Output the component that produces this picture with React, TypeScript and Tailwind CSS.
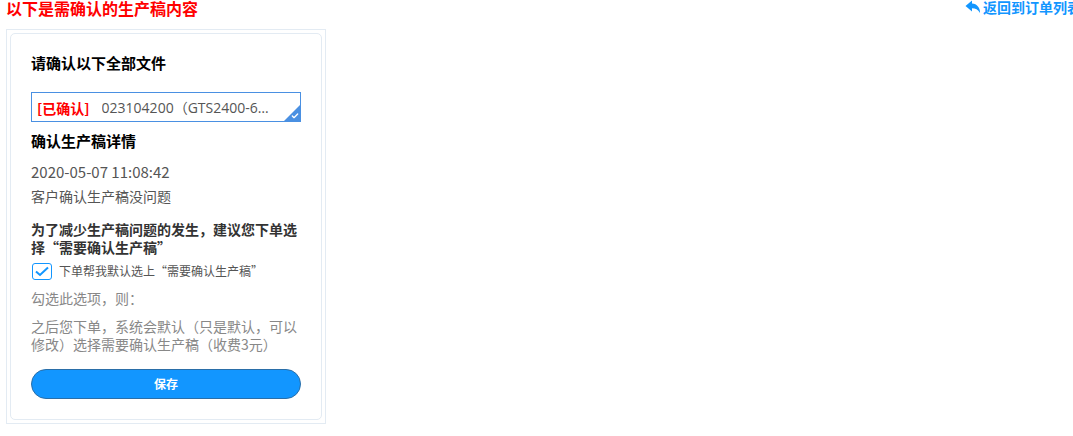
import { Check } from "lucide-react";

const font = "font-['Noto_Sans_CJK_SC','Noto_Sans',sans-serif]";

export default function App() {
  return (
    <div className={`h-[436px] w-[1073px] overflow-hidden bg-white ${font}`}>
      <div className="flex w-[1081px] items-start justify-between pl-[6px] -mt-[3px] h-[32px]">
        <h1 className="text-base font-bold leading-[22px] text-[#ff0000]">以下是需确认的生产稿内容</h1>
        <a className="flex items-center text-sm font-bold leading-[20px] text-[#1296ff]" href="#">
          <svg width="16" height="14" viewBox="0 0 16 14" className="mr-[2px]" fill="#1296ff">
            <path d="M7 0.5 L0.5 6 L7 11.5 V8.2 C10.5 8.2 13 9.5 15 13 C15.2 8 12 3.8 7 3.6 Z" />
          </svg>
          返回到订单列表
        </a>
      </div>

      <div className="ml-[6px] w-[320px] border border-[#e3ebf3] p-[3px]">
        <div className="h-[387px] rounded-[5px] border border-[#e3ebf3] px-5 pt-[19px]">
          <h2 className="text-[15px] font-bold leading-5 text-black">请确认以下全部文件</h2>

          <div className="relative mt-[19px] flex h-[30px] w-[270px] items-center overflow-hidden border border-[#4a90e2] pl-[5px] pt-px text-sm">
            <span className="font-bold text-[#ff0000]">[已确认]</span>
            <span className="ml-[12px] w-[174px] truncate font-['Open_Sans','Noto_Sans_CJK_SC',sans-serif] text-[#555]">
              023104200（GTS2400-6B-1200）
            </span>
            <div className="absolute bottom-0 right-0 h-0 w-0 border-b-[16px] border-l-[16px] border-b-[#4a90e2] border-l-transparent" />
            <Check className="absolute bottom-[1px] right-[1px] text-white" size={8} strokeWidth={4} />
          </div>

          <h3 className="mt-[9px] text-[15px] font-bold leading-5 text-black">确认生产稿详情</h3>
          <p className="mt-[11px] text-[15px] leading-5 text-[#555]">2020-05-07 11:08:42</p>
          <p className="mt-[4px] text-sm leading-5 text-[#555]">客户确认生产稿没问题</p>

          <p className="mt-[14px] text-sm font-bold leading-[18px] text-[#333]">
            为了减少生产稿问题的发生，建议您下单选择“需要确认生产稿”
          </p>
          <label className="mt-[5px] flex items-center">
            <span className="ml-[1px] flex h-[17px] w-[20px] items-center justify-center rounded-[3px] border border-[#1296ff]">
              <svg width="14" height="11" viewBox="0 0 14 11" fill="none" stroke="#1296ff" strokeWidth="2">
                <path d="M1 5.5 L5 9 L13 1.5" />
              </svg>
            </span>
            <span className="ml-[7px] text-xs leading-5 text-[#555]">下单帮我默认选上“需要确认生产稿”</span>
          </label>
          <p className="mt-[7px] text-sm leading-5 text-[#888]">勾选此选项，则：</p>
          <p className="mt-[9px] text-sm leading-[18px] text-[#888]">
            之后您下单，系统会默认（只是默认，可以修改）选择需要确认生产稿（收费3元）
          </p>
          <button className="mt-[16px] h-[30px] w-[270px] rounded-[15px] border border-[#2a6ea8] bg-[#1296ff] text-xs font-bold text-white">
            保存
          </button>
        </div>
      </div>
    </div>
  );
}
